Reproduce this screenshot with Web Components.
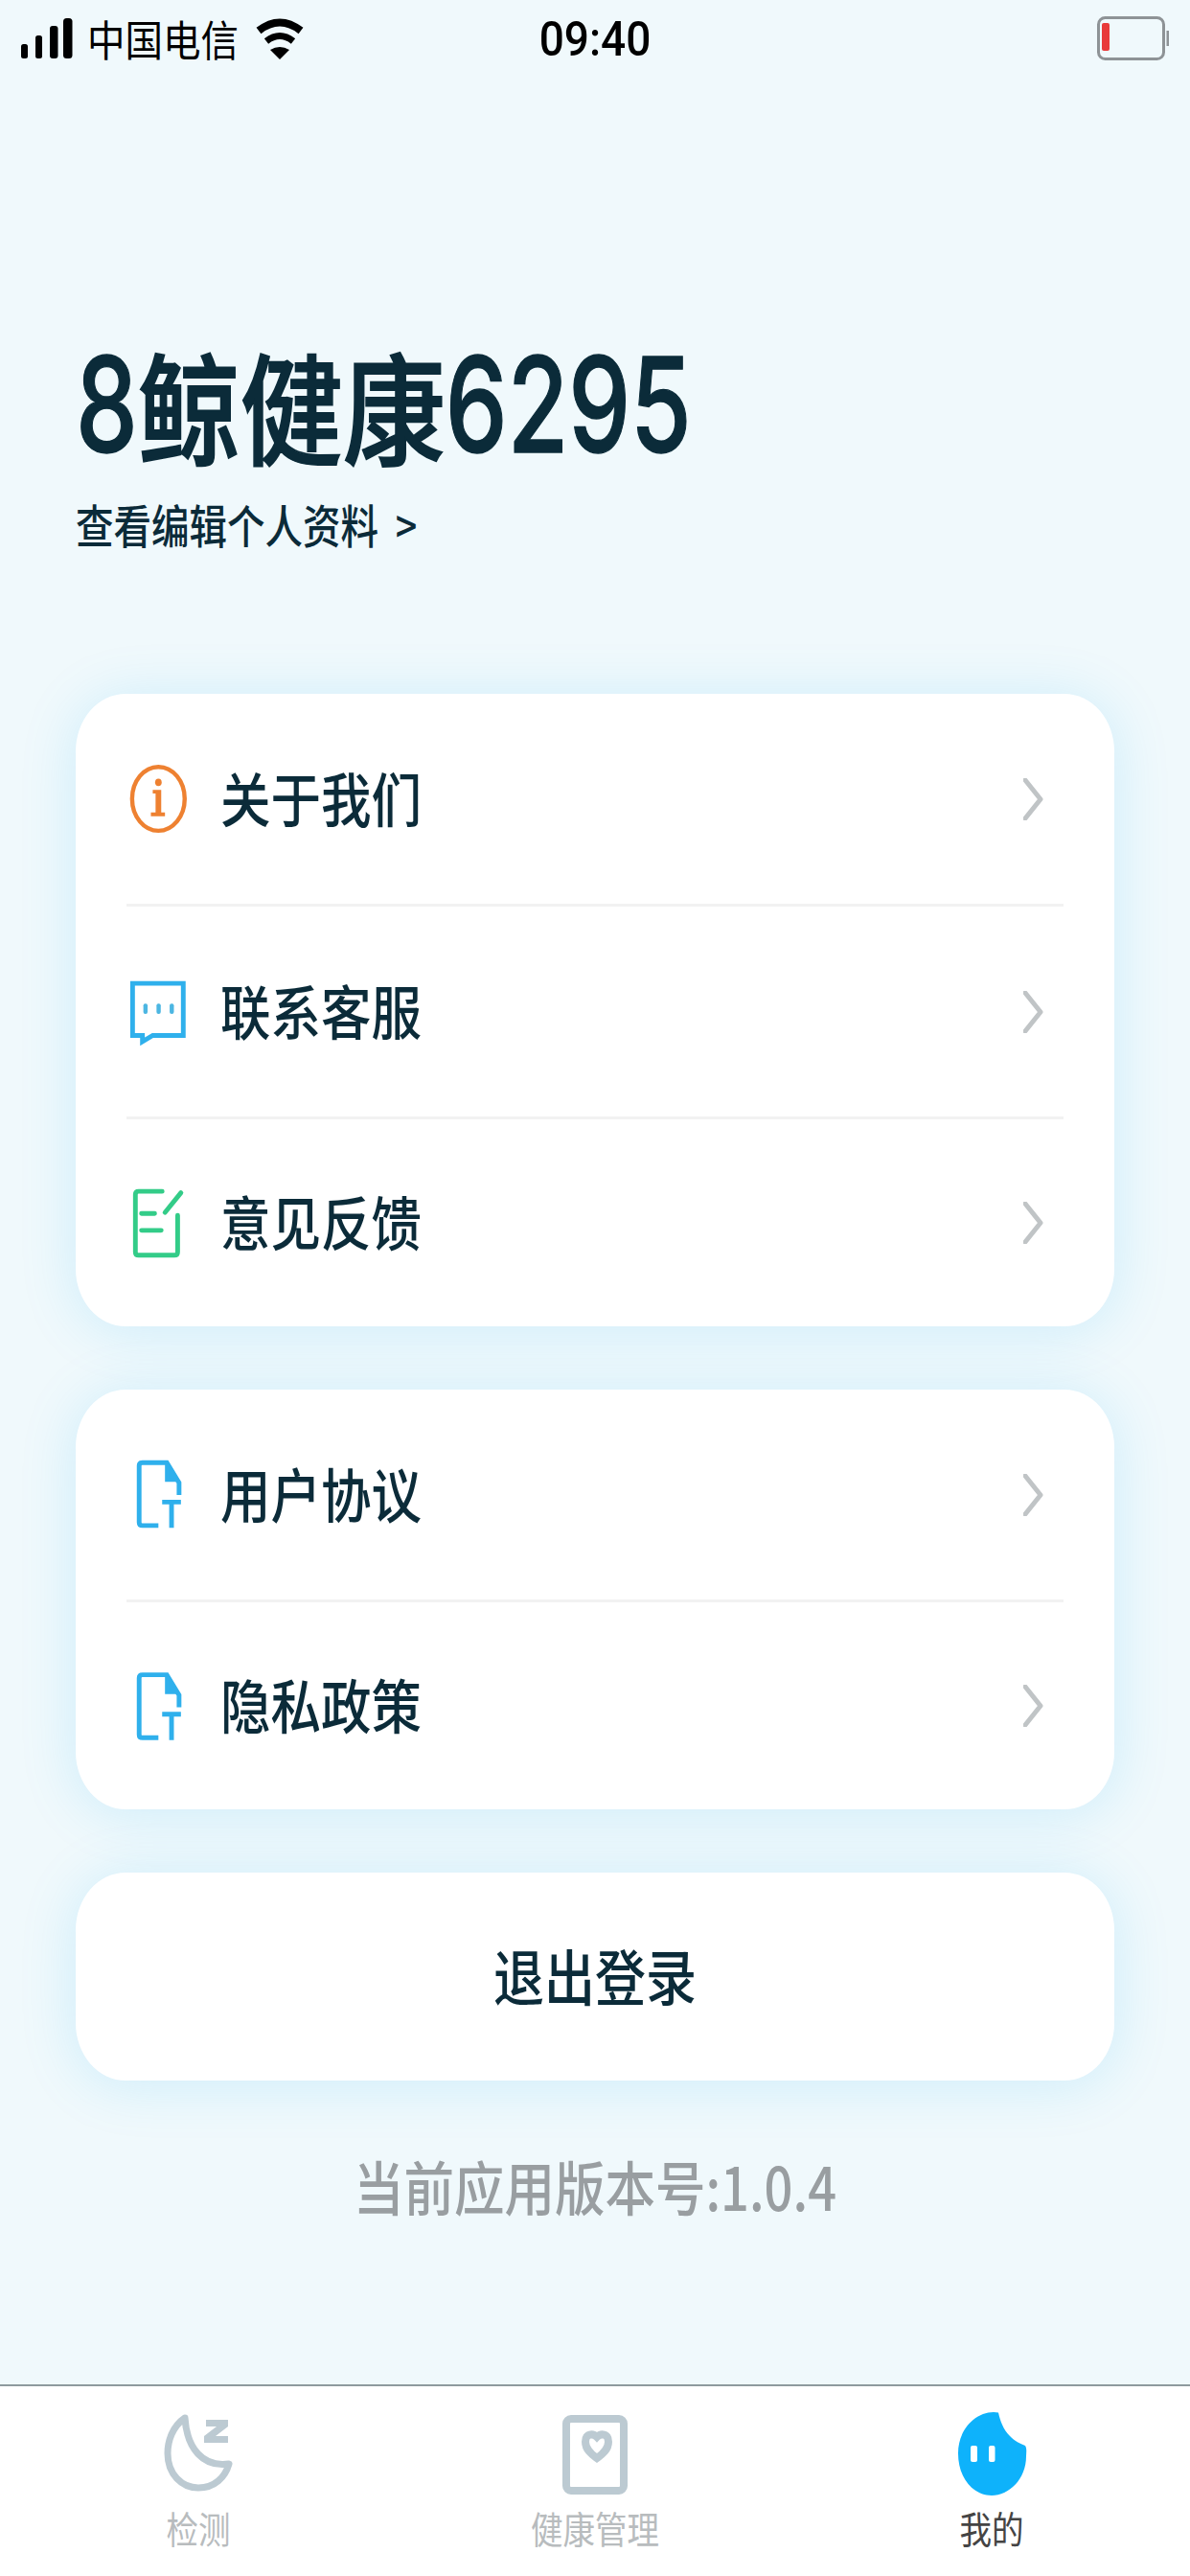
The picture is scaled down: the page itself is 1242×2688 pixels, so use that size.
<!DOCTYPE html>
<html lang="zh">
<head>
<meta charset="utf-8">
<title>我的</title>
<style>
    html, body { margin: 0; padding: 0; background: #f0f9fc; }
</style>
</head>
<body>
<app-screen>
    <status-bar carrier="中国电信" time="09:40"></status-bar>
    <profile-head>
        <span slot="num">8</span><span slot="name">鲸健康</span><span slot="tail">6295</span>
        <span slot="link">查看编辑个人资料&nbsp; &gt;</span>
    </profile-head>
    <menu-card>
        <menu-row>
            <svg slot="icon" width="100" height="100" viewBox="0 0 100 100" fill="none">
                <ellipse cx="34" cy="49.500" rx="28" ry="34" stroke="#ee8131" stroke-width="4.500"/>
                <ellipse cx="34" cy="32" rx="3.500" ry="4" fill="#ee8131"/>
                <path d="M28 40h9v24h4v4H26v-4h5V44h-3z" fill="#ee8131"/>
            </svg>
            关于我们
        </menu-row>
        <menu-row>
            <svg slot="icon" width="100" height="100" viewBox="0 0 100 100" fill="none">
                <path d="M6.500 19.500H60.500V75H28L17 81.500V75H6.500Z" stroke="#2fb0ec" stroke-width="5"/>
                <rect x="18" y="41" width="4.500" height="11" rx="2" fill="#4cb6e2"/>
                <rect x="32" y="41" width="4.500" height="11" rx="2" fill="#4cb6e2"/>
                <rect x="46" y="41" width="4.500" height="11" rx="2" fill="#4cb6e2"/>
            </svg>
            联系客服
        </menu-row>
        <menu-row>
            <svg slot="icon" width="100" height="100" viewBox="0 0 100 100" fill="none" stroke="#33cc88" stroke-width="5" stroke-linecap="round">
                <path d="M38 16.500H13Q9.500 16.500 9.500 20V81Q9.500 84.500 13 84.500H51Q54.500 84.500 54.500 81V42"/>
                <path d="M41 39L58 18"/>
                <path d="M16 40H30M16 58H37"/>
            </svg>
            意见反馈
        </menu-row>
    </menu-card>
    <menu-card>
        <menu-row>
            <svg slot="icon" width="100" height="100" viewBox="0 0 100 100" fill="none" stroke="#2fb0ec" stroke-width="5">
                <path d="M34 82.500H17Q13.500 82.500 13.500 79V19Q13.500 15.500 17 15.500H43L56 37V50"/>
                <path d="M43 17V34H55" fill="#2fb0ec" stroke-width="4"/>
                <path d="M38 57.500H58M48 57.500V85"/>
            </svg>
            用户协议
        </menu-row>
        <menu-row>
            <svg slot="icon" width="100" height="100" viewBox="0 0 100 100" fill="none" stroke="#2fb0ec" stroke-width="5">
                <path d="M34 84H17Q13.500 84 13.500 80.500V20.500Q13.500 17 17 17H43L56 38.500V51.500"/>
                <path d="M43 18.500V35.500H55" fill="#2fb0ec" stroke-width="4"/>
                <path d="M38 59H58M48 59V86.500"/>
            </svg>
            隐私政策
        </menu-row>
    </menu-card>
    <logout-button>退出登录</logout-button>
    <version-line>当前应用版本号:1.0.4</version-line>
    <tab-bar>
        <tab-item>
            <svg slot="icon" width="100" height="110" viewBox="-3 0 100 110" fill="none" stroke="#bccad2" stroke-width="7" stroke-linejoin="round" stroke-linecap="round">
                <path d="M33 18C20 27 15 42 15 55C15 77 30 91 47 91C64 91 75 80 79 66C52 70 35 50 33 18Z"/>
                <path d="M55 20H78V27L65 37H78V44H53V37L66 27H55Z" fill="#bccad2" stroke="none"/>
            </svg>
            检测
        </tab-item>
        <tab-item>
            <svg slot="icon" width="100" height="110" viewBox="-4 0 100 110" fill="none" stroke="#bccad2" stroke-width="8">
                <rect x="16" y="19" width="60" height="75" rx="5"/>
                <path d="M48 38C44 34 36 34 36 43C36 52 44 57 48 60C52 57 60 52 60 43C60 34 52 34 48 38Z"/>
            </svg>
            健康管理
        </tab-item>
        <tab-item active>
            <svg slot="icon" width="100" height="110" viewBox="0 0 100 110">
                <path d="M57 12.500C60 26 66 40 85 47C87 50 86 55 86 58C86 82 68 99 50 99C30 99 15 80 15 55C15 30 33 12 52 12Z" fill="#0eb2fb"/>
                <rect x="28" y="47" width="7" height="17" rx="2" fill="#fff"/>
                <rect x="47" y="47" width="6.500" height="17" rx="2" fill="#fff"/>
            </svg>
            我的
        </tab-item>
    </tab-bar>
</app-screen>

<script>
const CJK = `"Noto Sans CJK SC", "Noto Sans", sans-serif`;
const CARD_SHADOW = `0 4px 60px rgba(0,170,240,.15)`;

class CyBase extends HTMLElement {
    constructor() {
        super();
        this.dom = this.attachShadow({mode:'open'});
    }
    createStyle() { return ''; }
    createTemplate() { return `<slot></slot>`; }
    connectedCallback() {
        this.dom.innerHTML = this.createStyle() + this.createTemplate();
    }
}

class AppScreen extends CyBase {
    createStyle() {
        return `<style>
            :host{display:flex; flex-direction:column; width:1242px; height:2688px; overflow:hidden;
                background:#f0f9fc; color:#0b2b39; font-family:${CJK};}
        </style>`;
    }
}
customElements.define('app-screen', AppScreen);

class StatusBar extends CyBase {
    createStyle() {
        return `<style>
            :host{display:grid; grid-template-columns:1fr auto 1fr; align-items:center; height:80px; color:#000;}
            #left{display:flex; align-items:center; padding-left:22px;}
            #carrier{display:inline-block; font-size:39.500px; line-height:44px; margin-left:14px; transform:scaleY(1.12);}
            #wifi{margin-left:18px;}
            #time{display:inline-block; font:500 46px/44px Roboto, sans-serif; transform:scaleY(1.1);}
            #right{display:flex; justify-content:flex-end; padding-right:22px;}
        </style>`;
    }
    createTemplate() {
        return `
        <div id="left">
            <svg width="55" height="42" viewBox="0 0 55 42" fill="#000">
                <rect x="0" y="27" width="7" height="15" rx="2.500"/>
                <rect x="15" y="18" width="7" height="24" rx="2.500"/>
                <rect x="30" y="8" width="8.500" height="34" rx="3"/>
                <rect x="44" y="0" width="9.500" height="42" rx="3.500"/>
            </svg>
            <span id="carrier">${this.getAttribute('carrier')}</span>
            <svg id="wifi" width="50" height="44" viewBox="0 0 50 44" fill="none" stroke="#000">
                <path d="M3 14Q25 -3 47 14" stroke-width="8"/>
                <path d="M11 25Q25 14 39 25" stroke-width="7"/>
                <path d="M15 34Q25 28 35 34L25 44Z" fill="#000" stroke="none"/>
            </svg>
        </div>
        <span id="time">${this.getAttribute('time')}</span>
        <div id="right">
            <svg width="75" height="46" viewBox="0 0 75 46" fill="none">
                <rect x="1.500" y="1.500" width="68" height="43" rx="7" stroke="#8e9396" stroke-width="3"/>
                <rect x="72.500" y="15" width="2.500" height="16" fill="#8e9396"/>
                <rect x="5" y="7" width="8" height="29" rx="2" fill="#e83a3a"/>
            </svg>
        </div>`;
    }
}
customElements.define('status-bar', StatusBar);

class ProfileHead extends CyBase {
    createStyle() {
        return `<style>
            :host{display:block; padding:282px 0 0 79px; height:362px; box-sizing:content-box;}
            #title{display:flex; align-items:center; height:120px;}
            #num, #tail{display:inline-block; font:500 103px/120px Inter, sans-serif; -webkit-text-stroke:1px #0b2b39; transform:scaleY(1.34);}
            #name{display:inline-block; font-size:107px; line-height:120px; font-weight:500; -webkit-text-stroke:1.5px #0b2b39; transform:scaleY(1.18);}
            #link{display:block; margin-top:41px; height:48px; font-size:39.500px; line-height:48px; font-weight:500;
                transform:scaleY(1.2); transform-origin:left center;}
        </style>`;
    }
    createTemplate() {
        return `
        <div id="title">
            <span id="num"><slot name="num"></slot></span><span id="name"><slot name="name"></slot></span><span id="tail"><slot name="tail"></slot></span>
        </div>
        <div id="link"><slot name="link"></slot></div>`;
    }
}
customElements.define('profile-head', ProfileHead);

class MenuCard extends CyBase {
    createStyle() {
        return `<style>
            :host{display:block; margin:0 79px 66px; background:#fff; border-radius:52px / 60px;
                box-shadow:${CARD_SHADOW};}
        </style>`;
    }
}
customElements.define('menu-card', MenuCard);

class MenuRow extends CyBase {
    createStyle() {
        return `<style>
            :host{display:flex; align-items:center; box-sizing:content-box; height:219px; margin:0 53px;
                border-bottom:3px solid #f2f2f2;}
            :host(:last-child){height:216px; border-bottom:none;}
            #icon{display:flex; width:98px; height:100px; flex:none;}
            #text{display:inline-block; font-size:52.500px; line-height:60px; font-weight:500;
                margin-bottom:6px; transform:scaleY(1.18);}
            #more{margin-left:auto; margin-right:21px; flex:none;}
        </style>`;
    }
    createTemplate() {
        return `
        <div id="icon"><slot name="icon"></slot></div>
        <span id="text"><slot></slot></span>
        <svg id="more" width="21" height="44" viewBox="0 0 21 44" fill="none">
            <path d="M2 2L18 22L2 42" stroke="#c0c4c6" stroke-width="5" stroke-linecap="round" stroke-linejoin="round"/>
        </svg>`;
    }
}
customElements.define('menu-row', MenuRow);

class LogoutButton extends CyBase {
    createStyle() {
        return `<style>
            :host{display:flex; align-items:center; justify-content:center; height:217px; margin:0 79px;
                background:#fff; border-radius:52px / 60px; box-shadow:${CARD_SHADOW};}
            span{display:inline-block; font-size:53px; line-height:60px; font-weight:500; margin-bottom:6px; transform:scaleY(1.18);}
        </style>`;
    }
    createTemplate() { return `<span><slot></slot></span>`; }
}
customElements.define('logout-button', LogoutButton);

class VersionLine extends CyBase {
    createStyle() {
        return `<style>
            :host{display:block; margin-top:79px; height:60px; text-align:center; color:#999ea1;}
            span{display:inline-block; font-size:52.500px; line-height:60px; font-weight:500; transform:scaleY(1.18);}
        </style>`;
    }
    createTemplate() { return `<span><slot></slot></span>`; }
}
customElements.define('version-line', VersionLine);

class TabBar extends CyBase {
    createStyle() {
        return `<style>
            :host{display:grid; grid-template-columns:repeat(3,1fr); margin-top:auto; height:198px;
                background:#fff; border-top:2px solid #8e9a9e;}
        </style>`;
    }
}
customElements.define('tab-bar', TabBar);

class TabItem extends CyBase {
    createStyle() {
        return `<style>
            :host{display:flex; flex-direction:column; align-items:center; padding-top:15px; color:#b8bcbe;}
            :host([active]){color:#444;}
            #icon{display:flex; width:100px; height:110px;}
            #text{display:inline-block; margin-top:3px; font-size:33.500px; line-height:40px; transform:scaleY(1.14);}
        </style>`;
    }
    createTemplate() {
        return `<div id="icon"><slot name="icon"></slot></div><span id="text"><slot></slot></span>`;
    }
}
customElements.define('tab-item', TabItem);
</script>
</body>
</html>
